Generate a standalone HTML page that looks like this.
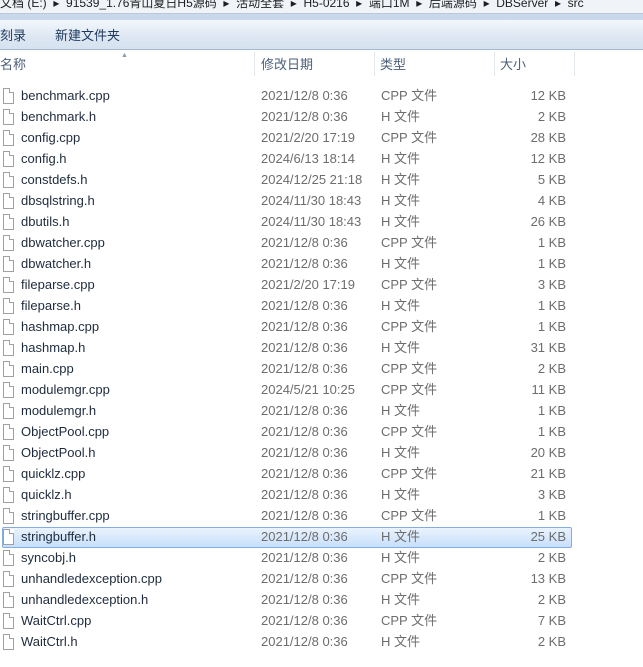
<!DOCTYPE html>
<html><head><meta charset="utf-8"><style>
body{margin:0;width:643px;height:667px;overflow:hidden;background:#fff;font-family:"Liberation Sans","Noto Sans CJK SC",sans-serif;font-size:13px;line-height:16px;position:relative}
.bc{position:absolute;left:0;top:0;width:643px;height:13px;background:#f0f4f9;border-bottom:1px solid #b9c9da;overflow:hidden}
.bc span{position:absolute;top:-5px;color:#1e1e1e;white-space:nowrap;font-size:12px}
.tb{position:absolute;left:0;top:14px;width:643px;height:36px;background:linear-gradient(#f3f7fc 0,#dde7f3 60%,#d6e2ef 100%);border-top:6px solid #c9d8ea;box-sizing:border-box;border-bottom:1px solid #a5b8cf}
.tb span{position:absolute;top:8px;color:#1e395b}
.hd{position:absolute;left:0;top:52px;width:643px;height:26px;background:#fff}
.hd span{position:absolute;top:5px;color:#4c607a}
.sep{position:absolute;top:52px;width:1px;height:24px;background:#e3e8ef}
.row{position:absolute;left:0;height:21px;width:643px}
.row .ic{position:absolute;left:3px;top:2px;width:11px;height:16px;border:1px solid #a0a0a0;background:#fff;box-sizing:border-box}
.row .ic:after{content:"";position:absolute;right:-1px;top:-1px;width:4px;height:4px;background:#fff;border-left:1px solid #a0a0a0;border-bottom:1px solid #a0a0a0}
.n{position:absolute;left:21px;top:2px;color:#1e2b3c}
.d{position:absolute;left:261px;top:2px;color:#6d6d6d}
.t{position:absolute;left:381px;top:2px;color:#6d6d6d}
.s{position:absolute;right:77px;top:2px;color:#6d6d6d}
.sel{position:absolute;left:2px;top:527px;width:568px;height:19px;border:1px solid #84acdd;border-radius:2px;background:linear-gradient(#eaf3fd,#c7e0fb)}
</style></head><body>
<div class="bc"><span style="left:0">文档 (E:) &nbsp;▸ &nbsp;91539_1.76青山夏日H5源码 &nbsp;▸ &nbsp;活动全套 &nbsp;▸ &nbsp;H5-0216 &nbsp;▸ &nbsp;端口1M &nbsp;▸ &nbsp;后端源码 &nbsp;▸ &nbsp;DBServer &nbsp;▸ &nbsp;src</span></div>
<div class="tb"><span style="left:0">刻录</span><span style="left:55px">新建文件夹</span></div>
<div class="hd"><span style="left:0">名称</span><span style="left:261px">修改日期</span><span style="left:380px">类型</span><span style="left:500px">大小</span>
<div style="position:absolute;left:121px;top:0;font-size:7px;line-height:8px;color:#8a9bb0">▲</div></div>
<div class="sep" style="left:254px"></div><div class="sep" style="left:374px"></div><div class="sep" style="left:494px"></div><div class="sep" style="left:574px"></div>
<div class="sel"></div>
<div id="rows"></div>
<script>
var r=[["benchmark.cpp","2021/12/8 0:36","CPP 文件","12 KB"],["benchmark.h","2021/12/8 0:36","H 文件","2 KB"],["config.cpp","2021/2/20 17:19","CPP 文件","28 KB"],["config.h","2024/6/13 18:14","H 文件","12 KB"],["constdefs.h","2024/12/25 21:18","H 文件","5 KB"],["dbsqlstring.h","2024/11/30 18:43","H 文件","4 KB"],["dbutils.h","2024/11/30 18:43","H 文件","26 KB"],["dbwatcher.cpp","2021/12/8 0:36","CPP 文件","1 KB"],["dbwatcher.h","2021/12/8 0:36","H 文件","1 KB"],["fileparse.cpp","2021/2/20 17:19","CPP 文件","3 KB"],["fileparse.h","2021/12/8 0:36","H 文件","1 KB"],["hashmap.cpp","2021/12/8 0:36","CPP 文件","1 KB"],["hashmap.h","2021/12/8 0:36","H 文件","31 KB"],["main.cpp","2021/12/8 0:36","CPP 文件","2 KB"],["modulemgr.cpp","2024/5/21 10:25","CPP 文件","11 KB"],["modulemgr.h","2021/12/8 0:36","H 文件","1 KB"],["ObjectPool.cpp","2021/12/8 0:36","CPP 文件","1 KB"],["ObjectPool.h","2021/12/8 0:36","H 文件","20 KB"],["quicklz.cpp","2021/12/8 0:36","CPP 文件","21 KB"],["quicklz.h","2021/12/8 0:36","H 文件","3 KB"],["stringbuffer.cpp","2021/12/8 0:36","CPP 文件","1 KB"],["stringbuffer.h","2021/12/8 0:36","H 文件","25 KB"],["syncobj.h","2021/12/8 0:36","H 文件","2 KB"],["unhandledexception.cpp","2021/12/8 0:36","CPP 文件","13 KB"],["unhandledexception.h","2021/12/8 0:36","H 文件","2 KB"],["WaitCtrl.cpp","2021/12/8 0:36","CPP 文件","7 KB"],["WaitCtrl.h","2021/12/8 0:36","H 文件","2 KB"]];
var h="";r.forEach(function(x,i){h+='<div class="row" style="top:'+(86+i*21)+'px"><div class="ic"></div><span class="n">'+x[0]+'</span><span class="d">'+x[1]+'</span><span class="t">'+x[2]+'</span><span class="s">'+x[3]+'</span></div>';});
document.getElementById("rows").innerHTML=h;
</script>
</body></html>
